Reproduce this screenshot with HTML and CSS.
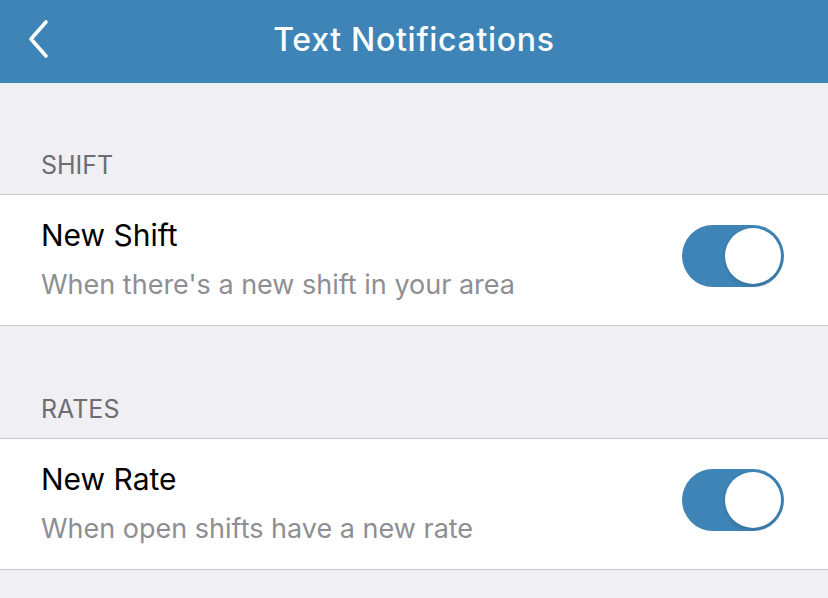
FILE: index.html
```html
<!DOCTYPE html>
<html lang="en">
<head>
  <meta charset="UTF-8" />
  <title>Text Notifications</title>
  <link rel="stylesheet" href="styles.css">
</head>
<body>

  <!-- Top navigation bar -->
  <div class="navbar">
    <button class="back-btn" aria-label="Back">
      <svg width="24" height="40" viewBox="0 0 24 40">
        <path d="M20 3 L5 20 L20 37" fill="none" stroke="#fff" stroke-width="3.6" stroke-linecap="round" stroke-linejoin="round"/>
      </svg>
    </button>
    <h1>Text Notifications</h1>
  </div>

  <!-- Shift section -->
  <div class="section-title">SHIFT</div>
  <div class="setting-row">
    <div class="setting-text">
      <div class="setting-name">New Shift</div>
      <div class="setting-desc">When there's a new shift in your area</div>
    </div>
    <div class="toggle on"><span class="knob"></span></div>
  </div>

  <!-- Rates section -->
  <div class="section-title">RATES</div>
  <div class="setting-row">
    <div class="setting-text">
      <div class="setting-name">New Rate</div>
      <div class="setting-desc">When open shifts have a new rate</div>
    </div>
    <div class="toggle on"><span class="knob"></span></div>
  </div>

</body>
</html>
```

FILE: styles.css
```css
* {
  margin: 0;
  padding: 0;
  box-sizing: border-box;
}

body {
  font-family: "Inter", "Liberation Sans", sans-serif;
  background-color: #efeff4;
  min-height: 100vh;
}

/* Navigation bar */
.navbar {
  height: 83px;
  background-color: #3e84b6;
  display: flex;
  align-items: center;
  justify-content: center;
  position: relative;
}

.navbar h1 {
  color: white;
  font-size: 32px;
  font-weight: 500;
  letter-spacing: 0.7px;
  margin-top: -5px;
}

.back-btn {
  position: absolute;
  left: 26px;
  top: 19px;
  background: none;
  border: none;
  cursor: pointer;
  display: flex;
}

/* Section headers */
.section-title {
  padding: 70px 41px 17px;
  font-size: 25px;
  line-height: 24px;
  color: #6d6d72;
  border-bottom: 1px solid #c8c7cc;
}

.setting-row + .section-title {
  padding-top: 71px;
}

/* Rows */
.setting-row {
  background: white;
  height: 131px;
  display: flex;
  align-items: center;
  justify-content: space-between;
  padding: 0 44px 0 41px;
  border-bottom: 1px solid #c8c7cc;
}

.setting-name {
  font-size: 30px;
  color: #000;
  line-height: 36px;
  margin-top: -3px;
}

.setting-desc {
  font-size: 27px;
  color: #8e8e93;
  line-height: 32px;
  margin-top: 16px;
}

/* Toggle switch */
.toggle {
  width: 102px;
  height: 62px;
  border-radius: 31px;
  background-color: #e5e5ea;
  position: relative;
  margin-top: -8px;
}

.toggle.on {
  background-color: #3e84b6;
}

.toggle .knob {
  position: absolute;
  top: 3px;
  left: 3px;
  width: 56px;
  height: 56px;
  border-radius: 50%;
  background: white;
  box-shadow: 0 2px 4px rgba(0,0,0,0.15);
}

.toggle.on .knob {
  left: 43px;
}
```
